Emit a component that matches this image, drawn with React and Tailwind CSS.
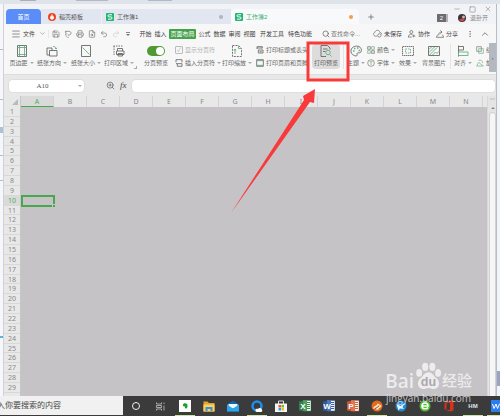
import React from "react";
import { Search, Save, Printer, Undo2, Redo2, Menu, ChevronDown, ChevronUp, ZoomIn, MoreVertical, Minus, Square, X, Plus, FileSearch } from "lucide-react";

const menus = ["开始", "插入", "页面布局", "公式", "数据", "审阅", "视图"];
const columns = "ABCDEFGHIJKLMN".split("");
const rows = Array.from({ length: 29 }, (_, i) => i + 1);

function Icon({ children, className = "h-3 w-3" }) {
  return (
    <svg viewBox="0 0 24 24" className={`${className} shrink-0`} fill="none" stroke="#666" strokeWidth="1.8">
      {children}
    </svg>
  );
}

function Caret() {
  return <span className="ml-0.5 h-0 w-0 border-x-2 border-t-2 border-x-transparent border-t-[#aaa]" />;
}

function BigTool({ label, caret, className = "", children }) {
  return (
    <button className={`flex shrink-0 flex-col items-center justify-between pt-px pb-0.5 ${className}`}>
      <span className="flex h-3 items-center">{children}</span>
      <span className="flex h-2 items-center">
        {label}
        {caret && <Caret />}
      </span>
    </button>
  );
}

function SmallTool({ label, caret, children }) {
  return (
    <button className="flex h-2 items-center gap-0.5">
      {children}
      <span className="flex items-center">
        {label}
        {caret && <Caret />}
      </span>
    </button>
  );
}

function Sheet({ fill = "#22b573" }) {
  return (
    <svg viewBox="0 0 16 16" className="h-2 w-2 shrink-0">
      <rect width="16" height="16" rx="2" fill={fill} />
      <path d="M12 3.5H6.2a2 2 0 0 0 0 4.3h3.600a2 2 0 0 1 0 4.500H4" fill="none" stroke="#fff" strokeWidth="2" />
    </svg>
  );
}

function TitleTabs() {
  return (
    <header className="flex h-5 shrink-0 items-end bg-[#f2f3f7] pl-0.5">
      <nav className="flex h-[15px] min-w-0 grow text-[#555]">
        <button className="w-[35px] shrink-0 rounded-t-sm bg-[#5b8df8] text-white">首页</button>
        <button className="flex w-[60px] shrink-0 items-center gap-[3px] bg-[#e2e6f0] pl-[7px]">
          <svg viewBox="0 0 16 16" className="h-2 w-2">
            <circle cx="8" cy="8" r="8" fill="#f0441f" />
            <path d="M8 2c3 3 0 4 2 5 1-1 2 0 2 2 0 3-2 4-4 4s-4-1-4-4c0-2 3-3 4-7Z" fill="#fff" />
          </svg>
          稻壳模板
        </button>
        <button className="flex w-[130px] shrink-0 items-center gap-[3px] border-l border-[#eceff5] bg-[#e2e6f0] pl-1">
          <Sheet />
          <span className="grow text-left">工作簿1</span>
          <span className="mr-2 h-1 w-1 rounded-full bg-[#b1b5bf]" />
        </button>
        <button className="flex w-[128px] shrink-0 items-center gap-[3px] rounded-t-sm bg-[#f8f9fb] pl-1 text-[#38b06c]">
          <Sheet />
          <span className="grow text-left">工作簿2</span>
          <span className="mr-1.5 h-1 w-1 rounded-full bg-[#eda04e]" />
        </button>
        <button aria-label="新建" className="ml-2 flex items-center">
          <Plus className="h-2 w-2" color="#555" />
        </button>
      </nav>
      <div className="flex h-5 shrink-0 flex-col items-end pr-1">
        <div className="flex h-2.5 items-center gap-2 text-[#999]">
          <button aria-label="最小化"><Minus className="h-2 w-2" strokeWidth={2} /></button>
          <button aria-label="最大化"><Square className="h-[7px] w-[7px]" strokeWidth={2.500} /></button>
          <button aria-label="关闭"><X className="h-2 w-2" strokeWidth={2} /></button>
        </div>
        <div className="flex h-2 items-center pr-1">
          <span className="flex h-2 w-[9px] items-center justify-center bg-[#6b6b70] text-white">2</span>
          <span className="h-2 w-0.5 bg-[#b3b3b8]" />
          <svg viewBox="0 0 16 16" className="mr-1 ml-2.5 h-2 w-2">
            <circle cx="8" cy="8" r="8" fill="#3b3340" />
            <path d="M2 11a7 7 0 0 0 12 0L9 9Z" fill="#c84b45" />
            <circle cx="11" cy="6" r="3" fill="#d8b3a4" />
          </svg>
          <span className="text-[#888]">退卦开</span>
        </div>
      </div>
    </header>
  );
}

function MenuBar() {
  return (
    <div className="flex h-[19px] shrink-0 items-center bg-[#f7f7f7] text-[#444]">
      <button className="ml-[7px] flex items-center gap-0.5">
        <Menu className="h-2.5 w-2.5" strokeWidth={1.5} color="#555" />
        文件
        <ChevronDown className="ml-0.5 h-[7px] w-[7px]" color="#888" />
      </button>
      <div className="ml-0.5 flex items-center gap-1 border-l border-[#e8e8e8] pl-[3px] text-[#777]">
        <button aria-label="保存"><Save className="h-2 w-2" /></button>
        <button aria-label="输出">
          <Icon className="h-2 w-2"><path d="M3 4h12c8 0 8 11 0 11h-4M9 20l-5-5 5-5M5 4v7M10 22h4" stroke="#777" strokeWidth="2.200" /></Icon>
        </button>
        <button aria-label="打印"><Printer className="h-2 w-2" /></button>
        <button aria-label="预览"><FileSearch className="h-2 w-2" /></button>
        <button aria-label="撤销"><Undo2 className="h-2 w-2" /></button>
        <button aria-label="恢复" className="text-[#cfcfcf]"><Redo2 className="h-2 w-2" /></button>
        <button aria-label="更多" className="ml-0.5 flex flex-col items-center gap-px">
          <span className="h-px w-1 bg-[#888]" />
          <span className="h-0 w-0 border-x-2 border-t-2 border-x-transparent border-t-[#777]" />
        </button>
      </div>
      <nav className="ml-[9px] flex shrink-0 items-center gap-0.5">
        {menus.map((m) => (
          <button key={m} className={m === "页面布局" ? "h-2.5 w-[27px] rounded-[1px] bg-[#45a14b] text-white" : "w-[13px]"}>{m}</button>
        ))}
        <button className="ml-0.5">开发工具</button>
        <button className="ml-0.5">特色功能</button>
      </nav>
      <label className="ml-2.5 flex w-10 items-center gap-px">
        <Search className="h-2 w-2 shrink-0" color="#555" />
        <input aria-label="查找命令" placeholder="查找命令..." className="w-8 min-w-0 bg-transparent outline-none placeholder:text-[#777]" />
      </label>
      <div className="ml-auto flex shrink-0 items-center gap-1.5 pr-1.5">
        <button className="flex items-center gap-0.5">
          <Icon className="h-[9px] w-[9px]"><path d="M11 19H6C0 18 0 10 5 9c1-7 12-8 13 0 4 0 5 3 5 5" /><circle cx="17" cy="17" r="4.500" /></Icon>
          未保存
        </button>
        <button className="flex items-center gap-0.5">
          <Icon className="h-2 w-2"><circle cx="10" cy="6" r="4.500" strokeWidth="2.200" /><path d="M1 22c0-12 12-10 13-7M1 21h10M17 14v8M13 18h9" strokeWidth="2.200" /></Icon>
          协作
        </button>
        <button className="flex items-center gap-0.5">
          <Icon className="h-2 w-2"><path d="M5 14 1 22h22l-4-8M8 16C8 9 11 6 18 6M13 1l5 5-5 5" strokeWidth="2.200" /></Icon>
          分享
        </button>
        <button aria-label="选项" className="ml-0.5"><MoreVertical className="h-2 w-2" color="#777" /></button>
        <button aria-label="折叠"><ChevronUp className="h-2.5 w-2.5" color="#666" /></button>
      </div>
    </div>
  );
}

function Ribbon() {
  return (
    <div className="flex h-8 shrink-0 overflow-hidden border-b border-[#dedede] bg-[#f7f7f7] text-[#666]">
      <div className="flex min-w-0 grow items-start overflow-hidden whitespace-nowrap *:mt-px *:h-[25px]">
        <BigTool label="页边距" caret className="ml-1.5 w-[23px]">
          <Icon><path d="M3 1h18v22H3z" /><path d="M7 1v22M17 1v22M3 5h18M3 19h18" stroke="#69ad83" /></Icon>
        </BigTool>
        <BigTool label="纸张方向" caret className="ml-1 w-[30px]">
          <Icon><path d="M2 6h10v5M2 6v14h4M7 11h15v11H7z" /><path d="M14 3c4 0 6 1 6 5m-2-2 2 2 2-2" stroke="#69ad83" /></Icon>
        </BigTool>
        <BigTool label="纸张大小" caret className="ml-1 w-[30px]">
          <Icon><path d="M3 1h18v22H3z" /><path d="m5 5 14 14" stroke="#69ad83" /></Icon>
        </BigTool>
        <BigTool label="打印区域" caret className="ml-[3px] w-[30px]">
          <Icon><path d="M1 2h20" strokeDasharray="3 2" /><path d="M2 2v20" strokeDasharray="3 2" /><path d="M9 12V7h10v5M7 12h15v7H7zM10 17h9v5h-9z" /></Icon>
        </BigTool>
        <span className="flex w-[3px] shrink-0 items-end">
          <span className="h-[3px] w-[3px] border-r border-b border-[#aaa]" />
        </span>
        <label className="ml-1.5 flex w-[26px] shrink-0 flex-col items-center justify-between pt-px pb-0.5">
          <input type="checkbox" defaultChecked className="mt-px flex h-2.5 w-[18px] appearance-none items-center justify-end rounded-full bg-[#4f9a33] pr-px after:h-2 after:w-2 after:rounded-full after:bg-white after:content-['']" />
          <span className="flex h-2 items-center">分页预览</span>
        </label>
        <div className="ml-1.5 flex w-[45px] shrink-0 flex-col justify-between py-0.5">
          <label className="flex h-2 items-center gap-0.5 text-[#b0b0b0]">
            <input type="checkbox" checked readOnly disabled className="flex h-2 w-2 appearance-none items-center justify-center rounded-[1px] border border-[#bbb] after:text-[6px] after:content-['✓']" />
            显示分页符
          </label>
          <SmallTool label="插入分页符" caret>
            <Icon className="h-2 w-2"><path d="M3 10V2h18v8M3 14h18v8H7v-8" strokeWidth="2.500" /></Icon>
          </SmallTool>
        </div>
        <BigTool label="打印缩放" caret className="ml-0.5 w-[30px]">
          <Icon><path d="M3 1h12l6 6v16H3z" strokeDasharray="4 2" /><path d="M8 18V8m-2 3 2-3 2 3M15 2v5h6" stroke="#69ad83" /></Icon>
        </BigTool>
        <div className="ml-1 flex w-[52px] shrink-0 flex-col justify-between overflow-hidden py-0.5">
          <SmallTool label="打印标题或表头">
            <Icon className="h-2 w-2"><path d="M3 9V2h16v5M3 6h16M7 12h14v9H7zM11 17h6" strokeWidth="2.500" /></Icon>
          </SmallTool>
          <SmallTool label="打印页眉和页脚">
            <Icon className="h-2 w-2"><path d="M2 2h20v20H2z" strokeWidth="2.500" /><path d="M2 5h20M2 19h20" stroke="#69ad83" strokeWidth="3" /></Icon>
          </SmallTool>
        </div>
        <BigTool label="打印预览" className="ml-1 w-7 rounded-sm bg-[#dcdcdc]">
          <Icon><path d="M20 9V6l-5-5H2v22h10M6 8h9M6 13h5" /><circle cx="16" cy="15" r="4.500" stroke="#69ad83" /><path d="m19 19 4 4" stroke="#69ad83" /></Icon>
        </BigTool>
        <span className="mx-[3px] w-px shrink-0 bg-[#e4e4e4]" />
        <BigTool label="主题" caret className="w-[18px]">
          <Icon><path d="M12 22C5 21 1 16 2 10 4 3 12 1 18 3c5 3 6 8 3 12-3 2-6-1-7 2 1 3 0 5-2 5Z" /><path d="M6 12h3M8 7h3M14 6h3M17 11h3" stroke="#69ad83" strokeWidth="3" /></Icon>
        </BigTool>
        <div className="ml-0.5 flex w-[28px] shrink-0 flex-col justify-between py-0.5">
          <SmallTool label="颜色" caret>
            <Icon className="h-2 w-2"><path d="M2 2h8v8H2zM14 14h8v8h-8z" strokeWidth="2" /><path d="M14 2h8v8h-8zM2 14h8v8H2z" stroke="#69ad83" strokeWidth="2" /></Icon>
          </SmallTool>
          <SmallTool label="字体" caret>
            <Icon className="h-2 w-2"><circle cx="12" cy="12" r="10" /><path d="M7 8h10M12 8v10" stroke="#69ad83" strokeWidth="2" /></Icon>
          </SmallTool>
        </div>
        <BigTool label="效果" caret className="ml-1 w-[18px]">
          <Icon><path d="M1 3h22v18H1z" strokeDasharray="3 1" /><path d="M7 8h10v8H7z" stroke="#69ad83" strokeDasharray="3 2" /></Icon>
        </BigTool>
        <BigTool label="背景图片" className="ml-1 w-[26px]">
          <Icon><path d="M1 3h22v18H1z" /><path d="m2 9 5-5M2 15 13 4M3 20 18 5M9 20l6-6 3 3 5-5" stroke="#69ad83" /></Icon>
        </BigTool>
        <span className="mx-[3px] w-px shrink-0 bg-[#e4e4e4]" />
        <BigTool label="对齐" caret className="w-[18px]">
          <Icon><path d="M3 1v22M3 3h10v7H3" /><path d="M3 14h19v7H3z" stroke="#69ad83" /></Icon>
        </BigTool>
        <div className="ml-1 flex w-4 shrink-0 flex-col justify-between overflow-hidden py-0.5">
          <SmallTool label="组合" caret>
            <Icon className="h-2 w-2"><path d="M2 2h14v14H2z" /><path d="M8 8h14v14H8z" stroke="#69ad83" strokeWidth="2" /></Icon>
          </SmallTool>
          <SmallTool label="旋转" caret>
            <Icon className="h-2 w-2"><path d="M2 21h20L8 10zM8 4c7-2 12 2 12 8" stroke="#69ad83" strokeWidth="2" /></Icon>
          </SmallTool>
        </div>
      </div>
      <button aria-label="向右滚动" className="mb-0.5 w-[7px] shrink-0 bg-[#b4b8c1] text-[6px] text-[#666]">›</button>
    </div>
  );
}

function FormulaBar() {
  return (
    <div className="flex h-[21px] shrink-0 items-center bg-[#e8e8e8] pr-px pl-[5px]">
      <label className="flex h-3 w-[75px] items-center rounded-sm bg-white pr-0.5 ring-1 ring-[#dedede]">
        <input aria-label="名称框" defaultValue="A10" className="w-full min-w-0 bg-transparent text-center font-['Liberation_Serif',serif] text-[7px] text-[#555] outline-none" />
        <Caret />
      </label>
      <button aria-label="缩放" className="ml-[22px]"><ZoomIn className="h-[9px] w-[9px]" color="#666" /></button>
      <button className="mx-[5px] font-['Liberation_Serif',serif] text-[9px] text-[#444] italic">fx</button>
      <input aria-label="编辑栏" className="h-3 min-w-0 grow rounded-sm bg-white ring-1 ring-[#dedede] outline-none" />
    </div>
  );
}

function Grid() {
  return (
    <div className="flex min-h-0 grow bg-[#e8e8e8] font-['Noto_Sans',sans-serif] text-[7px] text-[#888]">
      <div className="flex w-[17px] shrink-0 flex-col border-r border-[#c6c6c6] pb-[3px] text-center">
        <div className="flex h-[11px] shrink-0 items-end justify-end p-0.5">
          <span className="h-0 w-0 border-b-[6px] border-l-[6px] border-b-[#bababa] border-l-transparent" />
        </div>
        {rows.map((r) => (
          <div key={r} className={`flex min-h-0 flex-1 items-center justify-center border-b border-[#d8d8d8] ${r === 10 ? "bg-[#dadada] text-[#4fb055]" : ""}`}>{r}</div>
        ))}
      </div>
      <div className="flex min-w-0 grow flex-col overflow-hidden">
        <div className="flex h-[11px] shrink-0 text-center">
          {columns.map((c) => (
            <div key={c} className={`flex w-[33px] shrink-0 items-center justify-center border-r border-[#d4d4d4] ${c === "A" ? "border-b border-b-[#48a84e] bg-[#dadada] text-[#4fb055]" : ""}`}>{c}</div>
          ))}
        </div>
        <div className="flex min-h-0 grow flex-col bg-[#c5c3c6] pb-[3px]">
          {rows.map((r) => (
            <div key={r} className="flex min-h-0 flex-1">
              {r === 10 && (
                <div className="relative -my-px h-3 w-[34px] border-2 border-[#48a84e]">
                  <span className="absolute -right-0.5 -bottom-0.5 h-[3px] w-[3px] border-t border-l border-[#c5c3c6] bg-[#48a84e]" />
                </div>
              )}
            </div>
          ))}
        </div>
      </div>
      <div className="flex w-[9px] shrink-0 flex-col items-center border-l border-[#d8d8d8] bg-[#e4e4e4] pr-px pl-0.5">
        <span className="mt-0.5 mb-[7px] h-0.5 w-full bg-[#d0d0d0]" />
        <span className="mb-1 h-0 w-0 border-x-2 border-b-2 border-x-transparent border-b-[#888]" />
        <span className="w-full grow rounded-t-sm bg-[#f6f6f6] ring-1 ring-[#d2d2d2]" />
      </div>
    </div>
  );
}

function OfficeIcon({ color, letter }) {
  return (
    <svg viewBox="0 0 24 24" className="h-3 w-3">
      <path d="M8 1h16v21H8z" fill="#f5f7f5" stroke={color} />
      <path d="M16 5h6M16 9h6M16 13h6M16 17h6" stroke={color} strokeWidth="2" />
      <path d="M0 3 16 1v22L0 21z" fill={color} fillOpacity=".85" />
      <text x="8" y="18" fontSize="16" fontWeight="bold" textAnchor="middle" fill="#fff" fontFamily="Liberation Sans, sans-serif">{letter}</text>
    </svg>
  );
}

const S = ({ children }) => <svg viewBox="0 0 24 24" className="h-3 w-3">{children}</svg>;

const apps = [
  { name: "印象笔记", open: true, icon: <S><path fill="#fff" d="M0 0h24v24H0z" /><path d="M8 9c2-4 9-3 9 2 0 4-1 7-4 6-2-2 0-3-1-4-3 0-5-1-4-4Z" fill="#12a32a" /></S> },
  { name: "文件资源管理器", icon: <S><path d="M1 3h8l3 3h11v17H1z" fill="#e2a52e" /><path d="M1 9h22v14H1z" fill="#fbd160" /><path d="M5 14h14v8h-4v-4H9v4H5z" fill="#3c8fd6" /></S> },
  { name: "邮件", icon: <S><path d="M0 9 12 1l12 8v14H0z" fill="#1166b0" /><path d="M3 8h18v9H3z" fill="#f2f8ff" /><path d="m0 9 12 8 12-8v14H0z" fill="#2ba5ed" /></S> },
  { name: "浏览器", open: true, icon: <S><circle cx="12" cy="12" r="9" fill="none" stroke="#1d8fef" strokeWidth="5" /><path d="M9 22c-1-5 4-5 5-4 2-4 8-2 8 2 2 3-1 4-3 4h-8Z" fill="#fff" /></S> },
  { name: "应用商店", icon: <S><path d="M7 8V2h10v6" fill="none" stroke="#ddd" strokeWidth="2" /><path d="M0 7h24v17H0z" fill="#f5f5f5" /><path d="M7 10h5v5H7z" fill="#ef5330" /><path d="M13 10h5v5h-5z" fill="#75b928" /><path d="M7 16h5v5H7z" fill="#1da3e8" /><path d="M13 16h5v5h-5z" fill="#fbb918" /></S> },
  { name: "Excel", icon: <OfficeIcon color="#2f8d4b" letter="X" /> },
  { name: "Word", icon: <OfficeIcon color="#2c62b3" letter="W" /> },
  { name: "PowerPoint", icon: <OfficeIcon color="#df5f35" letter="P" /> },
  { name: "播放器", open: true, icon: <S><circle cx="12" cy="12" r="11" fill="#e56a18" /><path d="M4 17c2-6 8-5 9-10l8 4c-1 6-5 3-7 9Z" fill="#fde3c6" /><path d="M5 20c3-5 8-3 11-9" fill="none" stroke="#a33e0a" strokeWidth="2" /></S> },
  { name: "迅雷", icon: <S><circle cx="12" cy="12" r="11" fill="#2288d4" /><path d="m3 8 8 4 9-6-5 8 3 4-8-1-3 4Z" fill="#e6f7ff" /></S> },
  { name: "安全浏览器", icon: <S><circle cx="12" cy="12" r="11" fill="#52ba32" /><path d="M5 12h13c0-8-12-8-12 0 0 7 9 7 12 3" fill="none" stroke="#fff" strokeWidth="3" /></S> },
  { name: "Office", icon: <S><path d="m3 6 12-5 6 2v18l-6 2-12-4 11 1V5L7 7v10l-4 2Z" fill="#d83219" /></S> },
  { name: "HM", open: true, icon: <span className="text-[6px] font-bold text-[#dfe7ec]">HM</span> },
  { name: "WPS", open: true, icon: <S><path d="M0 0h24v24H0z" fill="#2b7df0" /><path d="m3 8 3 9 4-9 3 9 4-9h5" fill="none" stroke="#fff" strokeWidth="2" /></S> },
];

function Taskbar() {
  return (
    <footer className="flex h-5 shrink-0 overflow-hidden bg-[#3b3b3b]">
      <label className="mb-px flex w-[123px] shrink-0 items-center overflow-hidden bg-[#f1f1f1]">
        <input aria-label="搜索" placeholder="入你要搜索的内容" className="-ml-[3px] w-full bg-transparent text-[8px] outline-none placeholder:text-[#444]" />
      </label>
      <button aria-label="Cortana" className="flex w-[25px] shrink-0 items-center justify-center">
        <span className="h-2 w-2 rounded-full border border-[#eee]" />
      </button>
      <button aria-label="任务视图" className="flex w-[25px] shrink-0 items-center justify-center">
        <svg viewBox="0 0 18 18" className="h-[9px] w-[9px]" fill="none" stroke="#ccc" strokeWidth="1.500"><path d="M1 1v3h10V1M1 17v-3h10v3M1 7h10v4H1zM16 1v3M16 7v10" /></svg>
      </button>
      {apps.map((a) => (
        <button key={a.name} aria-label={a.name} className="flex w-6 shrink-0 flex-col items-center justify-between">
          <span className="flex grow items-center pt-px">{a.icon}</span>
          <span className={`h-px w-5 ${a.open ? "bg-[#c9e59c]" : ""}`} />
        </button>
      ))}
    </footer>
  );
}

function Watermark() {
  return (
    <div className="pointer-events-none absolute right-7 bottom-2.5 flex flex-col items-center text-white/70">
      <div className="flex h-7 items-end">
        <span className="font-['Open_Sans',sans-serif] text-[19px] leading-[18px] font-semibold">Bai</span>
        <svg viewBox="0 0 24 26" className="ml-0.5 h-7 w-[25px]" fill="currentColor">
          <ellipse cx="3" cy="10" rx="2.800" ry="3.700" />
          <ellipse cx="8.800" cy="4.200" rx="2.900" ry="4" />
          <ellipse cx="15.700" cy="4.200" rx="2.900" ry="4" />
          <ellipse cx="21.200" cy="10" rx="2.800" ry="3.700" />
          <path d="M12 9.500c4 0 5 4 8 6 4 4 2 10-3 10-2 0-3-1-5-1s-3 1-5 1c-5 0-7-6-3-10 3-2 4-6 8-6Z" />
          <text x="12" y="22.500" fontSize="12" fontWeight="bold" textAnchor="middle" fill="#aaa8ab" fontFamily="Liberation Sans, sans-serif">du</text>
        </svg>
        <span className="ml-px text-[15px] leading-[18px] font-medium">经验</span>
      </div>
      <span className="font-['Open_Sans',sans-serif] text-[10px] leading-4">jingyan.baidu.com</span>
    </div>
  );
}

export default function App() {
  return (
    <div className="relative flex h-screen min-h-[416px] flex-col overflow-hidden bg-[#e9ecf2] font-['Liberation_Sans','Noto_Sans_CJK_SC',sans-serif] text-[6px] leading-none whitespace-nowrap">
      <div className="flex h-1 shrink-0 gap-10 bg-[#dfe3ea] pl-5">
        <span className="h-px w-4 bg-[#a9aec2]" />
        <span className="h-px w-8 bg-[#b4b8c9]" />
        <span className="h-px w-6 bg-[#b4b8c9]" />
      </div>
      <div className="flex min-h-0 grow">
        <aside className="flex w-1 shrink-0 flex-col border-r border-[#cfd2d8] bg-[#f6f7fa]">
          <div className="h-[46px] border-b border-[#b5bbd2]" />
          <div className="h-[50px] border-b border-[#b5bbd2]" />
          <div className="mt-[27px] h-1.5 bg-[#a9c2d6]" />
          <div className="h-[23px] border-b border-[#b5bbd2]" />
          <div className="h-[25px] border-b border-[#b5bbd2]" />
          <div className="h-[157px] border-b-2 border-[#5fb2dc]" />
        </aside>
        <main className="flex min-w-0 grow flex-col">
          <TitleTabs />
          <MenuBar />
          <Ribbon />
          <FormulaBar />
          <Grid />
        </main>
        <aside className="flex w-1 shrink-0 flex-col justify-end border-l border-[#b9bcc2] bg-[#f1f4f9] pb-2.5">
          <div className="h-[15px] bg-[#9ba3c4]" />
        </aside>
      </div>
      <Taskbar />
      <svg viewBox="0 0 500 416" className="pointer-events-none absolute top-0 left-0 h-[416px] w-[500px]">
        <rect x="308" y="43" width="40" height="37" fill="none" stroke="#f93a3a" strokeWidth="3" />
        <path d="M231 213 304 100l-1-4 12-7-1 14-4-1Z" fill="#f93a3a" />
      </svg>
      <Watermark />
    </div>
  );
}
